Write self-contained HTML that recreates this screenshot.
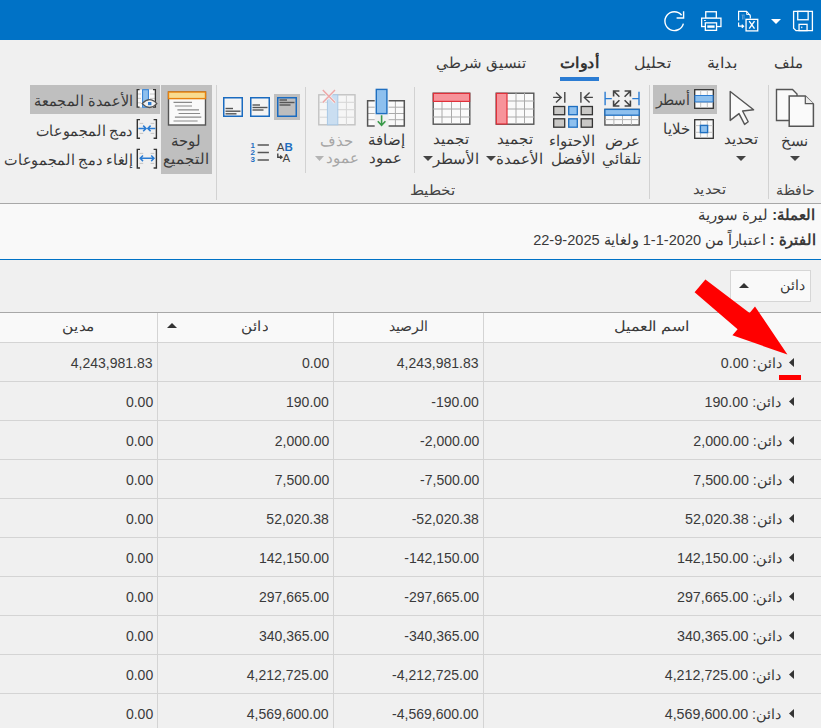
<!DOCTYPE html>
<html><head><meta charset="utf-8">
<style>
*{box-sizing:border-box;margin:0;padding:0}
html,body{width:821px;height:728px;overflow:hidden;background:#f0f0f0;font-family:"Liberation Sans",sans-serif;color:#3a3a3a}
.a{position:absolute}
svg.a{overflow:visible}
.t{position:absolute;white-space:nowrap;direction:rtl;line-height:20px}
.tl{position:absolute;white-space:nowrap;line-height:20px}
</style></head><body>

<div class="a" style="left:0px;top:0px;width:821px;height:40px;background:#0072c6;"></div>
<svg class="a" style="left:662px;top:9px" width="24" height="24" viewBox="0 0 24 24"><path d="M19.6 6.2 A9.4 9.4 0 1 0 21.4 14.6" fill="none" stroke="#fff" stroke-width="1.4"/><path d="M21.6 2.2V9H14.6" fill="none" stroke="#fff" stroke-width="1.4"/></svg>
<svg class="a" style="left:700px;top:10px" width="23" height="23" viewBox="0 0 23 23"><rect x="5.75" y="1.75" width="10.6" height="6.6" fill="none" stroke="#fff" stroke-width="1.3"/><rect x="1.65" y="8.15" width="19.3" height="8.4" fill="#0072c6" stroke="#fff" stroke-width="1.3"/><rect x="5.35" y="12.85" width="11.2" height="7.5" fill="#0072c6" stroke="#fff" stroke-width="1.3"/><rect x="7.3" y="15.4" width="7.3" height="2.4" fill="#fff"/><rect x="4" y="10" width="1.8" height="0.9" fill="#fff"/></svg>
<svg class="a" style="left:737px;top:10px" width="23" height="23" viewBox="0 0 23 23"><path d="M1.6 10.5V1.3H9.6L13.3 5.6V8.5" fill="none" stroke="#fff" stroke-width="1.2"/><path d="M9.6 1.3V4.5H13.3" fill="none" stroke="#fff" stroke-width="0.9"/><path d="M4.5 5H7.5M5.5 5V9.5M7 5V9.5" stroke="#6aa6dc" stroke-width="0.8"/><path d="M1.6 12.6V16.2H6.4M4.8 14.6L6.6 16.2L4.8 17.8" fill="none" stroke="#fff" stroke-width="1.2"/><rect x="9.05" y="9.35" width="11.7" height="11.55" fill="#0072c6" stroke="#fff" stroke-width="1.3"/><path d="M12.2 11.2L17.5 18.6M17.5 11.2L12.2 18.6" stroke="#fff" stroke-width="1.4"/></svg>
<svg class="a" style="left:771px;top:19px" width="10" height="5" viewBox="0 0 10 5"><path d="M0 0H10L5 5Z" fill="#fff"/></svg>
<svg class="a" style="left:792px;top:10px" width="23" height="23" viewBox="0 0 23 23"><path d="M1.6 1.4H20.4V20.6H4L1.6 18.2Z" fill="none" stroke="#fff" stroke-width="1.3"/><rect x="5.75" y="1.4" width="10.4" height="8.35" fill="none" stroke="#fff" stroke-width="1.3"/><rect x="7.05" y="14.35" width="8" height="6.25" fill="none" stroke="#fff" stroke-width="1.3"/><rect x="9" y="16.6" width="1.4" height="1.6" fill="#cfe3f5"/></svg>
<div class="t" style="right:18px;top:53px;font-size:15px;font-weight:normal;color:#3a3a3a;">ملف</div>
<div class="t" style="right:84px;top:53px;font-size:15px;font-weight:normal;color:#3a3a3a;transform:scaleX(1.08);transform-origin:100% 50%;">بداية</div>
<div class="t" style="right:150px;top:53px;font-size:15px;font-weight:normal;color:#3a3a3a;transform:scaleX(1.06);transform-origin:100% 50%;">تحليل</div>
<div class="t" style="right:222px;top:53px;font-size:15px;font-weight:bold;color:#333;transform:scaleX(1.07);transform-origin:100% 50%;">أدوات</div>
<div class="a" style="left:560px;top:77px;width:39px;height:4px;background:#2b7cd3;"></div>
<div class="t" style="right:295px;top:53px;font-size:15px;font-weight:normal;color:#3a3a3a;">تنسيق شرطي</div>
<div class="a" style="left:768px;top:85px;width:1px;height:114px;background:#d2d2d2;"></div>
<div class="a" style="left:649px;top:85px;width:1px;height:114px;background:#d2d2d2;"></div>
<div class="a" style="left:216px;top:85px;width:1px;height:115px;background:#d2d2d2;"></div>
<div class="a" style="left:414px;top:87px;width:1px;height:86px;background:#d2d2d2;"></div>
<div class="a" style="left:305px;top:87px;width:1px;height:86px;background:#d2d2d2;"></div>
<div class="t" style="right:6px;top:180px;font-size:14px;font-weight:normal;color:#444;">حافظة</div>
<div class="t" style="right:95px;top:179px;font-size:14px;font-weight:normal;color:#444;transform:scaleX(1.07);transform-origin:100% 50%;">تحديد</div>
<div class="t" style="right:366px;top:180px;font-size:14px;font-weight:normal;color:#444;transform:scaleX(1.09);transform-origin:100% 50%;">تخطيط</div>
<svg class="a" style="left:775px;top:88px" width="40" height="40" viewBox="0 0 40 40"><path d="M1.5 1.5H17.5L22 6V32.5H1.5Z" fill="#fafafa" stroke="#555" stroke-width="1.4"/><path d="M14.2 8H30.3L38.4 16V38.2H14.2Z" fill="#fafafa" stroke="#555" stroke-width="1.5"/><path d="M30.3 8V15.6H38.4" fill="#ececec" stroke="#555" stroke-width="1.2"/></svg>
<div class="t" style="right:13px;top:131px;font-size:15px;font-weight:normal;color:#3a3a3a;">نسخ</div>
<svg class="a" style="left:790.0px;top:156px" width="10" height="5" viewBox="0 0 10 5"><path d="M0 0H10L5.0 5Z" fill="#444"/></svg>
<svg class="a" style="left:729px;top:90px" width="26" height="36" viewBox="0 0 26 36"><path d="M1.2 1.5L24.6 19.8L13.6 21L19.2 31.8L15.6 34.4L10 23.6L1.2 30.4Z" fill="#fafafa" stroke="#555" stroke-width="1.4" stroke-linejoin="round"/></svg>
<div class="t" style="right:63px;top:129px;font-size:15px;font-weight:normal;color:#3a3a3a;">تحديد</div>
<svg class="a" style="left:736.0px;top:156px" width="10" height="5" viewBox="0 0 10 5"><path d="M0 0H10L5.0 5Z" fill="#444"/></svg>
<div class="a" style="left:653px;top:85px;width:64px;height:29px;background:#bfbfbf;"></div>
<svg class="a" style="left:694px;top:89px" width="20" height="20" viewBox="0 0 20 20"><rect x="0.7" y="0.7" width="18.6" height="18.6" fill="#fafafa" stroke="#333" stroke-width="1.3"/><path d="M6.7 1V19M13.3 1V19M1 6.7H19M1 13.3H19" stroke="#bbb" stroke-width="0.9"/><rect x="1" y="6.5" width="18" height="6.4" fill="#8ec0ee" stroke="#2b7cd3" stroke-width="1"/></svg>
<div class="t" style="right:131px;top:90px;font-size:15px;font-weight:normal;color:#3a3a3a;transform:scaleX(0.93);transform-origin:100% 50%;">أسطر</div>
<svg class="a" style="left:694px;top:119px" width="20" height="20" viewBox="0 0 20 20"><rect x="0.7" y="0.7" width="18.6" height="18.6" fill="#fafafa" stroke="#333" stroke-width="1.3"/><path d="M6.6 1V19M13.3 1V19M1 6.6H19M1 13.3H19" stroke="#bbb" stroke-width="0.9"/><rect x="6.4" y="6.4" width="7.2" height="7.2" fill="#8ec0ee" stroke="#1f6fc0" stroke-width="1.4"/></svg>
<div class="t" style="right:131px;top:119px;font-size:15px;font-weight:normal;color:#3a3a3a;">خلايا</div>
<svg class="a" style="left:603px;top:90px" width="38" height="37" viewBox="0 0 38 37"><path d="M2.1 1.7V15.3M2.1 8.6H8.8M36 1.7V15.3M36 8.6H29.3" stroke="#2b7cd3" stroke-width="1.4" fill="none"/><path d="M10.6 6.5V1H16.4M10.6 1L16.4 6.8M27.4 6.5V1H21.6M27.4 1L21.6 6.8M10.6 10.5V16H16.4M10.6 16L16.4 10.2M27.4 10.5V16H21.6M27.4 16L21.6 10.2" stroke="#444" stroke-width="1.6" fill="none"/><rect x="1.9" y="19.4" width="34.3" height="15.6" fill="#fafafa" stroke="#555" stroke-width="1.4"/><path d="M10.9 25V35M19.5 25V35M28.4 25V35M2 29.6H36" stroke="#b4b4b4" stroke-width="1"/><rect x="1.9" y="19.4" width="34.3" height="5.8" fill="#8ec0ee" stroke="#1f6fc0" stroke-width="1.3"/></svg>
<div class="t" style="right:181px;top:131px;font-size:15px;font-weight:normal;color:#3a3a3a;">عرض</div>
<div class="t" style="right:180px;top:149px;font-size:15px;font-weight:normal;color:#3a3a3a;">تلقائي</div>
<svg class="a" style="left:552px;top:90px" width="42" height="39" viewBox="0 0 42 39"><path d="M1.1 7.4H9.4M4 2.4L9.2 7.4L4 12.4M12.8 2V12.8M28.9 2V12.8M40.9 7.4H32.6M37.6 2.4L32.4 7.4L37.6 12.4" stroke="#444" stroke-width="1.4" fill="none"/><g stroke="#333" stroke-width="1.3" fill="#c9c8c6"><rect x="1.7" y="16.5" width="11" height="8.2"/><rect x="29.2" y="16.5" width="11.2" height="8.2"/><rect x="1.7" y="28.8" width="11" height="8.4"/><rect x="29.2" y="28.8" width="11.2" height="8.4"/></g><g stroke="#1f6fc0" stroke-width="1.3" fill="#8ec0ee"><rect x="16.7" y="16.5" width="8.6" height="8.2"/><rect x="16.7" y="28.8" width="8.6" height="8.4"/></g></svg>
<div class="t" style="right:226px;top:131px;font-size:15px;font-weight:normal;color:#3a3a3a;">الاحتواء</div>
<div class="t" style="right:226px;top:149px;font-size:15px;font-weight:normal;color:#3a3a3a;">الأفضل</div>
<svg class="a" style="left:495px;top:92px" width="40" height="34" viewBox="0 0 40 34"><rect x="1.2" y="1.2" width="37.6" height="31" fill="#fafafa" stroke="#555" stroke-width="1.4"/><path d="M21 1V32M29.5 1V32M11.5 9H39M11.5 17H39M11.5 25H39" stroke="#aaa" stroke-width="1"/><rect x="1.4" y="1.4" width="10.6" height="30.6" fill="#f7939a" stroke="#e0303a" stroke-width="1.2"/></svg>
<div class="t" style="right:288px;top:129px;font-size:15px;font-weight:normal;color:#3a3a3a;">تجميد</div>
<div class="t" style="right:278px;top:149px;font-size:15px;font-weight:normal;color:#3a3a3a;">الأعمدة</div>
<svg class="a" style="left:486.0px;top:156px" width="10" height="5" viewBox="0 0 10 5"><path d="M0 0H10L5.0 5Z" fill="#444"/></svg>
<svg class="a" style="left:432px;top:92px" width="39" height="34" viewBox="0 0 39 34"><rect x="1.2" y="1.2" width="36.6" height="31" fill="#fafafa" stroke="#555" stroke-width="1.4"/><path d="M10 9V32M19.5 9V32M28.5 9V32M1 17H38M1 25H38" stroke="#aaa" stroke-width="1"/><rect x="1.4" y="1.4" width="36.2" height="8" fill="#f7939a" stroke="#e0303a" stroke-width="1.2"/></svg>
<div class="t" style="right:352px;top:129px;font-size:15px;font-weight:normal;color:#3a3a3a;">تجميد</div>
<div class="t" style="right:342px;top:149px;font-size:15px;font-weight:normal;color:#3a3a3a;">الأسطر</div>
<svg class="a" style="left:423.0px;top:156px" width="10" height="5" viewBox="0 0 10 5"><path d="M0 0H10L5.0 5Z" fill="#444"/></svg>
<svg class="a" style="left:366px;top:88px" width="40" height="40" viewBox="0 0 40 40"><rect x="1.6" y="12.8" width="36.7" height="25.2" fill="#fafafa"/><rect x="8.7" y="12" width="13.9" height="27" fill="#f0f0f0"/><path d="M2 19.2H8.7M2 25.5H8.7M2 31.7H8.7M22.6 19.2H38M22.6 25.5H38M22.6 31.7H38M29.4 13V38" stroke="#aaa" stroke-width="1"/><path d="M8.7 12.8H1.6V38H8.7M22.6 12.8H38.3V38H22.6" fill="none" stroke="#555" stroke-width="1.5"/><rect x="10.3" y="1.4" width="10.6" height="24.2" fill="#8ec0ee" stroke="#1f6fc0" stroke-width="1.4"/><path d="M15.6 27.3V37.5M11.8 33.2L15.6 37.4L19.4 33.2" stroke="#3a9a4a" stroke-width="1.6" fill="none"/></svg>
<div class="t" style="right:416px;top:130px;font-size:15px;font-weight:normal;color:#3a3a3a;">إضافة</div>
<div class="t" style="right:419px;top:148px;font-size:15px;font-weight:normal;color:#3a3a3a;">عمود</div>
<svg class="a" style="left:317px;top:89px" width="40" height="37" viewBox="0 0 40 37"><rect x="1.8" y="5.8" width="36.2" height="30" fill="#f6f6f6" stroke="#c2c2c2" stroke-width="1.4"/><path d="M2 13.3H38M2 20.7H38M2 28.2H38M29.4 6V36" stroke="#d6d6d6" stroke-width="1"/><rect x="10.4" y="5.8" width="10.4" height="30" fill="#cadef1" stroke="#a8c8e6" stroke-width="1"/><path d="M5.8 1L18 13.6M18 1L5.8 13.6" stroke="#f0f0f0" stroke-width="3"/><path d="M5.8 1L18 13.6M18 1L5.8 13.6" stroke="#eea6a6" stroke-width="1.4"/></svg>
<div class="t" style="right:468px;top:131px;font-size:15px;font-weight:normal;color:#a6a6a6;">حذف</div>
<div class="t" style="right:462px;top:148px;font-size:15px;font-weight:normal;color:#a6a6a6;">عمود</div>
<svg class="a" style="left:314.5px;top:156px" width="9" height="5" viewBox="0 0 9 5"><path d="M0 0H9L4.5 5Z" fill="#b4b4b4"/></svg>
<svg class="a" style="left:223px;top:97px" width="20" height="20" viewBox="0 0 20 20"><rect x="0.75" y="0.75" width="18.5" height="18.5" fill="#f4f4f4" stroke="#1a6bc0" stroke-width="1.5"/><path d="M2.5 11.5H10" stroke="#555" stroke-width="1.4"/><path d="M2.5 14.2H17.5" stroke="#555" stroke-width="1.4"/><path d="M2.5 16.8H13.5" stroke="#555" stroke-width="1.4"/></svg>
<svg class="a" style="left:250px;top:97px" width="20" height="20" viewBox="0 0 20 20"><rect x="0.75" y="0.75" width="18.5" height="18.5" fill="#f4f4f4" stroke="#1a6bc0" stroke-width="1.5"/><path d="M2.5 8H10" stroke="#555" stroke-width="1.4"/><path d="M2.5 10.5H17.5" stroke="#555" stroke-width="1.4"/><path d="M2.5 13H13.5" stroke="#555" stroke-width="1.4"/></svg>
<div class="a" style="left:274px;top:94px;width:26px;height:26px;background:#bfbfbf;"></div>
<svg class="a" style="left:277px;top:97px" width="20" height="20" viewBox="0 0 20 20"><rect x="0.75" y="0.75" width="18.5" height="18.5" fill="#bdbdbd" stroke="#1a6bc0" stroke-width="1.5"/><path d="M2.5 3H10" stroke="#555" stroke-width="1.4"/><path d="M2.5 5.5H17.5" stroke="#555" stroke-width="1.4"/><path d="M2.5 8H13.5" stroke="#555" stroke-width="1.4"/></svg>
<svg class="a" style="left:250px;top:141px" width="20" height="22" viewBox="0 0 20 22"><g font-family="Liberation Sans" font-weight="bold" fill="#1f6fc0" font-size="8"><text x="0.6" y="6.6">1</text><text x="0.6" y="13.6">2</text><text x="0.6" y="20.8">3</text></g><path d="M7.6 3.9H18.9M7.6 11.4H18.9M7.6 18.9H18.9" stroke="#555" stroke-width="1.5"/></svg>
<svg class="a" style="left:276px;top:141px" width="18" height="22" viewBox="0 0 18 22"><g font-family="Liberation Sans" font-size="11.5"><text x="0.8" y="9.6" fill="#444">A</text><text x="8.4" y="9.6" fill="#1f6fc0" font-weight="bold">B</text><text x="6.4" y="20.6" fill="#444">A</text></g><path d="M1.8 12.4V16.2H5.8M4.2 14.6L6 16.2L4.2 17.8" stroke="#444" stroke-width="1.4" fill="none"/></svg>
<div class="a" style="left:161px;top:85px;width:51px;height:89px;background:#bfbfbf;"></div>
<svg class="a" style="left:167px;top:91px" width="40" height="36" viewBox="0 0 40 36"><rect x="1.5" y="1" width="37" height="33" fill="#fafafa" stroke="#555" stroke-width="1.4"/><rect x="1.5" y="1" width="37" height="6.6" fill="#f8dc90" stroke="#e8820e" stroke-width="1.4"/><path d="M6.5 11.3H25M7.9 15H25M10.4 18.8H32M11.6 22.5H33.1M7.9 26.2H34.3M6.5 30H30.6" stroke="#8a8a8a" stroke-width="1.2"/></svg>
<div class="t" style="right:620px;top:131px;font-size:15px;font-weight:normal;color:#3a3a3a;">لوحة</div>
<div class="t" style="right:612px;top:149px;font-size:15px;font-weight:normal;color:#3a3a3a;">التجميع</div>
<div class="a" style="left:30px;top:85px;width:130px;height:29px;background:#bfbfbf;"></div>
<svg class="a" style="left:136px;top:89px" width="22" height="22" viewBox="0 0 22 22"><rect x="1.2" y="0.6" width="18.2" height="17.6" fill="#fafafa"/><path d="M1.2 5H5M1.2 9.4H5M1.2 13.8H5M14 5H19.4M14 9.4H19.4M14 13.8H19.4" stroke="#c4c4c4" stroke-width="0.9"/><path d="M3.6 0.7H1.2V18.2H3.6M17 0.7H19.4V18.2H17" fill="none" stroke="#333" stroke-width="1.3"/><rect x="6.6" y="0.7" width="5.8" height="17.5" fill="#8ec0ee" stroke="#2b7cd3" stroke-width="1"/><path d="M6.2 14.6Q13.5 6.8 20.8 14.6Q13.5 22.4 6.2 14.6Z" fill="#f0f0f0" stroke="#555" stroke-width="1.3"/><rect x="12" y="13" width="3.4" height="3.2" fill="#2b7cd3"/></svg>
<div class="t" style="right:688px;top:91px;font-size:14.5px;font-weight:normal;color:#3a3a3a;transform:scaleX(0.96);transform-origin:100% 50%;">الأعمدة المجمعة</div>
<svg class="a" style="left:136px;top:119px" width="22" height="22" viewBox="0 0 22 22"><path d="M3.6 4.4H7.2M3.6 14.4H7.2M14.6 4.4H18.2M14.6 14.4H18.2" stroke="#c4c4c4" stroke-width="1"/><path d="M4 0.6H1.3V19.2H4M17.6 0.6H20.4V19.2H17.6" fill="none" stroke="#333" stroke-width="1.4"/><path d="M2.4 9.4H10M7.2 6.6L10 9.4L7.2 12.2M19.4 9.4H11.8M14.6 6.6L11.8 9.4L14.6 12.2" stroke="#2b7cd3" stroke-width="1.5" fill="none"/></svg>
<div class="t" style="right:688px;top:121px;font-size:14.5px;font-weight:normal;color:#3a3a3a;transform:scaleX(0.95);transform-origin:100% 50%;">دمج المجموعات</div>
<svg class="a" style="left:136px;top:149px" width="22" height="22" viewBox="0 0 22 22"><path d="M3.6 4.4H7.2M3.6 14.4H7.2M14.6 4.4H18.2M14.6 14.4H18.2" stroke="#c4c4c4" stroke-width="1"/><path d="M4 0.4H1.3V19H4M17.6 0.4H20.4V19H17.6" fill="none" stroke="#333" stroke-width="1.4"/><path d="M4.2 9.3H18M7 6.5L4.2 9.3L7 12.1M15.2 6.5L18 9.3L15.2 12.1" stroke="#2b7cd3" stroke-width="1.5" fill="none"/></svg>
<div class="t" style="right:688px;top:150px;font-size:14.5px;font-weight:normal;color:#3a3a3a;transform:scaleX(0.96);transform-origin:100% 50%;">إلغاء دمج المجموعات</div>
<div class="a" style="left:0px;top:203px;width:821px;height:1px;background:#a8a8a8;"></div>
<div class="a" style="left:0px;top:204px;width:821px;height:55px;background:#f9f9f9;"></div>
<div class="a" style="left:0px;top:259px;width:821px;height:1px;background:#0072c6;"></div>
<div class="t" style="right:6px;top:205px;font-size:14.5px;font-weight:normal;color:#3a3a3a;"><b>العملة:</b> ليرة سورية</div>
<div class="t" style="right:6px;top:230px;font-size:15px;font-weight:normal;color:#3a3a3a;transform:scaleX(0.972);transform-origin:100% 50%;"><b>الفترة :</b> اعتباراً من 2020-1-1 ولغاية 2025-9-22</div>
<div class="a" style="left:0px;top:260px;width:821px;height:52px;background:#f0f0f0;"></div>
<div class="a" style="left:730px;top:270px;width:81px;height:32px;background:#f9f9f9;border:1px solid #d6d6d6"></div>
<div class="t" style="right:16px;top:275px;font-size:14px;font-weight:normal;color:#3a3a3a;">دائن</div>
<svg class="a" style="left:739px;top:283px" width="10" height="5" viewBox="0 0 10 5"><path d="M0 5H10L5 0Z" fill="#333"/></svg>
<div class="a" style="left:0px;top:312px;width:821px;height:1px;background:#a8a8a8;"></div>
<div class="a" style="left:0px;top:313px;width:821px;height:29px;background:#f9f9f9;"></div>
<div class="t" style="right:131px;top:316px;font-size:14px;font-weight:normal;color:#3a3a3a;transform:scaleX(1.14);transform-origin:100% 50%;">اسم العميل</div>
<div class="t" style="right:393px;top:316px;font-size:14px;font-weight:normal;color:#3a3a3a;">الرصيد</div>
<div class="t" style="right:553px;top:316px;font-size:14px;font-weight:normal;color:#3a3a3a;transform:scaleX(1.08);transform-origin:100% 50%;">دائن</div>
<svg class="a" style="left:167px;top:323px" width="10" height="5" viewBox="0 0 10 5"><path d="M0 5H10L5 0Z" fill="#333"/></svg>
<div class="t" style="right:726px;top:316px;font-size:14px;font-weight:normal;color:#3a3a3a;transform:scaleX(1.1);transform-origin:100% 50%;">مدين</div>
<div class="a" style="left:0px;top:342px;width:821px;height:1px;background:#d4d4d4;"></div>
<div class="t" style="right:39px;top:353px;font-size:14px;font-weight:normal;color:#3a3a3a;transform:scaleX(1.02);transform-origin:100% 50%;">دائن: 0.00</div>
<svg class="a" style="left:789px;top:358px" width="5" height="9" viewBox="0 0 5 9"><path d="M5 0V9L0 4.5Z" fill="#333"/></svg>
<div class="tl" style="right:342px;top:353px;font-size:15px;font-weight:normal;color:#3a3a3a;transform:scaleX(0.935);transform-origin:100% 50%;">4,243,981.83</div>
<div class="tl" style="right:492px;top:353px;font-size:15px;font-weight:normal;color:#3a3a3a;transform:scaleX(0.935);transform-origin:100% 50%;">0.00</div>
<div class="tl" style="right:668px;top:353px;font-size:15px;font-weight:normal;color:#3a3a3a;transform:scaleX(0.935);transform-origin:100% 50%;">4,243,981.83</div>
<div class="a" style="left:0px;top:381px;width:821px;height:1px;background:#d4d4d4;"></div>
<div class="t" style="right:39px;top:392px;font-size:14px;font-weight:normal;color:#3a3a3a;transform:scaleX(1.02);transform-origin:100% 50%;">دائن: 190.00</div>
<svg class="a" style="left:789px;top:397px" width="5" height="9" viewBox="0 0 5 9"><path d="M5 0V9L0 4.5Z" fill="#333"/></svg>
<div class="tl" style="right:342px;top:392px;font-size:15px;font-weight:normal;color:#3a3a3a;transform:scaleX(0.935);transform-origin:100% 50%;">-190.00</div>
<div class="tl" style="right:492px;top:392px;font-size:15px;font-weight:normal;color:#3a3a3a;transform:scaleX(0.935);transform-origin:100% 50%;">190.00</div>
<div class="tl" style="right:668px;top:392px;font-size:15px;font-weight:normal;color:#3a3a3a;transform:scaleX(0.935);transform-origin:100% 50%;">0.00</div>
<div class="a" style="left:0px;top:420px;width:821px;height:1px;background:#d4d4d4;"></div>
<div class="t" style="right:39px;top:431px;font-size:14px;font-weight:normal;color:#3a3a3a;transform:scaleX(1.02);transform-origin:100% 50%;">دائن: 2,000.00</div>
<svg class="a" style="left:789px;top:436px" width="5" height="9" viewBox="0 0 5 9"><path d="M5 0V9L0 4.5Z" fill="#333"/></svg>
<div class="tl" style="right:342px;top:431px;font-size:15px;font-weight:normal;color:#3a3a3a;transform:scaleX(0.935);transform-origin:100% 50%;">-2,000.00</div>
<div class="tl" style="right:492px;top:431px;font-size:15px;font-weight:normal;color:#3a3a3a;transform:scaleX(0.935);transform-origin:100% 50%;">2,000.00</div>
<div class="tl" style="right:668px;top:431px;font-size:15px;font-weight:normal;color:#3a3a3a;transform:scaleX(0.935);transform-origin:100% 50%;">0.00</div>
<div class="a" style="left:0px;top:459px;width:821px;height:1px;background:#d4d4d4;"></div>
<div class="t" style="right:39px;top:470px;font-size:14px;font-weight:normal;color:#3a3a3a;transform:scaleX(1.02);transform-origin:100% 50%;">دائن: 7,500.00</div>
<svg class="a" style="left:789px;top:475px" width="5" height="9" viewBox="0 0 5 9"><path d="M5 0V9L0 4.5Z" fill="#333"/></svg>
<div class="tl" style="right:342px;top:470px;font-size:15px;font-weight:normal;color:#3a3a3a;transform:scaleX(0.935);transform-origin:100% 50%;">-7,500.00</div>
<div class="tl" style="right:492px;top:470px;font-size:15px;font-weight:normal;color:#3a3a3a;transform:scaleX(0.935);transform-origin:100% 50%;">7,500.00</div>
<div class="tl" style="right:668px;top:470px;font-size:15px;font-weight:normal;color:#3a3a3a;transform:scaleX(0.935);transform-origin:100% 50%;">0.00</div>
<div class="a" style="left:0px;top:498px;width:821px;height:1px;background:#d4d4d4;"></div>
<div class="t" style="right:39px;top:509px;font-size:14px;font-weight:normal;color:#3a3a3a;transform:scaleX(1.02);transform-origin:100% 50%;">دائن: 52,020.38</div>
<svg class="a" style="left:789px;top:514px" width="5" height="9" viewBox="0 0 5 9"><path d="M5 0V9L0 4.5Z" fill="#333"/></svg>
<div class="tl" style="right:342px;top:509px;font-size:15px;font-weight:normal;color:#3a3a3a;transform:scaleX(0.935);transform-origin:100% 50%;">-52,020.38</div>
<div class="tl" style="right:492px;top:509px;font-size:15px;font-weight:normal;color:#3a3a3a;transform:scaleX(0.935);transform-origin:100% 50%;">52,020.38</div>
<div class="tl" style="right:668px;top:509px;font-size:15px;font-weight:normal;color:#3a3a3a;transform:scaleX(0.935);transform-origin:100% 50%;">0.00</div>
<div class="a" style="left:0px;top:537px;width:821px;height:1px;background:#d4d4d4;"></div>
<div class="t" style="right:39px;top:548px;font-size:14px;font-weight:normal;color:#3a3a3a;transform:scaleX(1.02);transform-origin:100% 50%;">دائن: 142,150.00</div>
<svg class="a" style="left:789px;top:553px" width="5" height="9" viewBox="0 0 5 9"><path d="M5 0V9L0 4.5Z" fill="#333"/></svg>
<div class="tl" style="right:342px;top:548px;font-size:15px;font-weight:normal;color:#3a3a3a;transform:scaleX(0.935);transform-origin:100% 50%;">-142,150.00</div>
<div class="tl" style="right:492px;top:548px;font-size:15px;font-weight:normal;color:#3a3a3a;transform:scaleX(0.935);transform-origin:100% 50%;">142,150.00</div>
<div class="tl" style="right:668px;top:548px;font-size:15px;font-weight:normal;color:#3a3a3a;transform:scaleX(0.935);transform-origin:100% 50%;">0.00</div>
<div class="a" style="left:0px;top:576px;width:821px;height:1px;background:#d4d4d4;"></div>
<div class="t" style="right:39px;top:587px;font-size:14px;font-weight:normal;color:#3a3a3a;transform:scaleX(1.02);transform-origin:100% 50%;">دائن: 297,665.00</div>
<svg class="a" style="left:789px;top:592px" width="5" height="9" viewBox="0 0 5 9"><path d="M5 0V9L0 4.5Z" fill="#333"/></svg>
<div class="tl" style="right:342px;top:587px;font-size:15px;font-weight:normal;color:#3a3a3a;transform:scaleX(0.935);transform-origin:100% 50%;">-297,665.00</div>
<div class="tl" style="right:492px;top:587px;font-size:15px;font-weight:normal;color:#3a3a3a;transform:scaleX(0.935);transform-origin:100% 50%;">297,665.00</div>
<div class="tl" style="right:668px;top:587px;font-size:15px;font-weight:normal;color:#3a3a3a;transform:scaleX(0.935);transform-origin:100% 50%;">0.00</div>
<div class="a" style="left:0px;top:615px;width:821px;height:1px;background:#d4d4d4;"></div>
<div class="t" style="right:39px;top:626px;font-size:14px;font-weight:normal;color:#3a3a3a;transform:scaleX(1.02);transform-origin:100% 50%;">دائن: 340,365.00</div>
<svg class="a" style="left:789px;top:631px" width="5" height="9" viewBox="0 0 5 9"><path d="M5 0V9L0 4.5Z" fill="#333"/></svg>
<div class="tl" style="right:342px;top:626px;font-size:15px;font-weight:normal;color:#3a3a3a;transform:scaleX(0.935);transform-origin:100% 50%;">-340,365.00</div>
<div class="tl" style="right:492px;top:626px;font-size:15px;font-weight:normal;color:#3a3a3a;transform:scaleX(0.935);transform-origin:100% 50%;">340,365.00</div>
<div class="tl" style="right:668px;top:626px;font-size:15px;font-weight:normal;color:#3a3a3a;transform:scaleX(0.935);transform-origin:100% 50%;">0.00</div>
<div class="a" style="left:0px;top:654px;width:821px;height:1px;background:#d4d4d4;"></div>
<div class="t" style="right:39px;top:665px;font-size:14px;font-weight:normal;color:#3a3a3a;transform:scaleX(1.02);transform-origin:100% 50%;">دائن: 4,212,725.00</div>
<svg class="a" style="left:789px;top:670px" width="5" height="9" viewBox="0 0 5 9"><path d="M5 0V9L0 4.5Z" fill="#333"/></svg>
<div class="tl" style="right:342px;top:665px;font-size:15px;font-weight:normal;color:#3a3a3a;transform:scaleX(0.935);transform-origin:100% 50%;">-4,212,725.00</div>
<div class="tl" style="right:492px;top:665px;font-size:15px;font-weight:normal;color:#3a3a3a;transform:scaleX(0.935);transform-origin:100% 50%;">4,212,725.00</div>
<div class="tl" style="right:668px;top:665px;font-size:15px;font-weight:normal;color:#3a3a3a;transform:scaleX(0.935);transform-origin:100% 50%;">0.00</div>
<div class="a" style="left:0px;top:693px;width:821px;height:1px;background:#d4d4d4;"></div>
<div class="t" style="right:39px;top:704px;font-size:14px;font-weight:normal;color:#3a3a3a;transform:scaleX(1.02);transform-origin:100% 50%;">دائن: 4,569,600.00</div>
<svg class="a" style="left:789px;top:709px" width="5" height="9" viewBox="0 0 5 9"><path d="M5 0V9L0 4.5Z" fill="#333"/></svg>
<div class="tl" style="right:342px;top:704px;font-size:15px;font-weight:normal;color:#3a3a3a;transform:scaleX(0.935);transform-origin:100% 50%;">-4,569,600.00</div>
<div class="tl" style="right:492px;top:704px;font-size:15px;font-weight:normal;color:#3a3a3a;transform:scaleX(0.935);transform-origin:100% 50%;">4,569,600.00</div>
<div class="tl" style="right:668px;top:704px;font-size:15px;font-weight:normal;color:#3a3a3a;transform:scaleX(0.935);transform-origin:100% 50%;">0.00</div>
<div class="a" style="left:157px;top:313px;width:1px;height:415px;background:#d4d4d4;"></div>
<div class="a" style="left:333px;top:313px;width:1px;height:415px;background:#d4d4d4;"></div>
<div class="a" style="left:483px;top:313px;width:1px;height:415px;background:#d4d4d4;"></div>
<svg class="a" style="left:690px;top:275px" width="100" height="82" viewBox="0 0 100 82"><path d="M4.6 17.3L15.4 4.4L59.6 38L65 31.4L97.4 79.5L42.4 60.3L47.6 54.3Z" fill="#ff0000"/></svg>
<div class="a" style="left:779px;top:375px;width:22px;height:5px;background:#ff0000;"></div>
</body></html>
